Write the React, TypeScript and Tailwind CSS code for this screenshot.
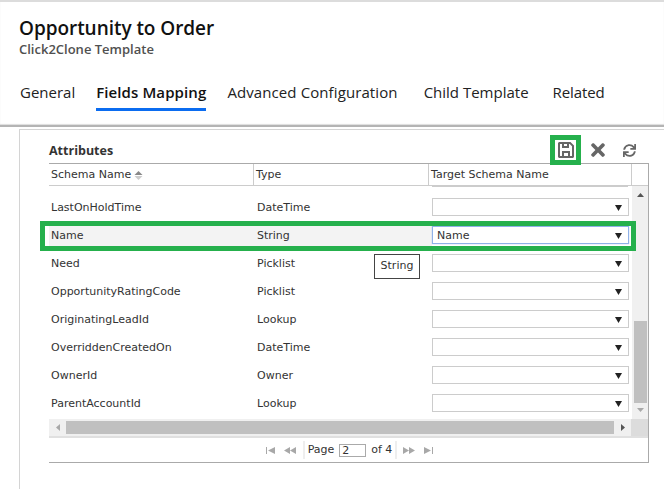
import { FaTimes, FaSync } from 'react-icons/fa'

const rows = [
  { name: 'LastOnHoldTime', type: 'DateTime' },
  { name: 'Name', type: 'String', value: 'Name', active: true },
  { name: 'Need', type: 'Picklist' },
  { name: 'OpportunityRatingCode', type: 'Picklist' },
  { name: 'OriginatingLeadId', type: 'Lookup' },
  { name: 'OverriddenCreatedOn', type: 'DateTime' },
  { name: 'OwnerId', type: 'Owner' },
  { name: 'ParentAccountId', type: 'Lookup' },
]

function PagerIcon({ d, w = 10 }: { d: string; w?: number }) {
  return (
    <svg width={w} height="7" viewBox={`0 0 ${w} 7`} className="fill-[#a8a8a8]">
      <path d={d} />
    </svg>
  )
}

export default function App() {
  return (
    <div className="relative w-[664px] h-[489px] overflow-hidden bg-white font-['DejaVu_Sans',sans-serif] text-[11px] text-[#333]">
      {/* Header */}
      <div className="h-[127px] border-t-2 border-[#dcdcdc] border-b-2 border-b-[#b4b4b4] shadow-[0_-1px_1px_#ddd_inset] pl-[19px] font-['Open_Sans',sans-serif]">
        <h1 className="mt-[15px] text-[19px] leading-[22px] font-semibold text-[#111] -tracking-[0.05px]">Opportunity to Order</h1>
        <p className="mt-[3px] text-[13px] leading-[15px] font-semibold text-[#505050]">Click2Clone Template</p>
        <div className="flex mt-[25px] pl-px text-[15px] leading-[21px] text-[#222]">
          <div className="pb-[8px]">General</div>
          <div className="ml-[21px] pb-[5px] border-b-[3px] border-[#0b6cf0] font-semibold text-[#111] tracking-[0.1px]">Fields Mapping</div>
          <div className="ml-[21px] pb-[8px] tracking-[0.1px]">Advanced Configuration</div>
          <div className="ml-[26px] pb-[8px]">Child Template</div>
          <div className="ml-[24px] pb-[8px] -tracking-[0.1px]">Related</div>
        </div>
      </div>

      {/* Card */}
      <div className="ml-[19px] mt-[2px] h-[360px] border-l border-t border-[#d4d4d4] pl-[29px] pr-[15px]">
        <div className="flex h-[33px] items-center justify-between">
          <span className="font-['Open_Sans',sans-serif] text-[12.5px] font-bold text-[#333] pt-[10px]">Attributes</span>
          <div className="flex items-center pr-[13px] pt-[7px] text-[#666]">
            <svg width="16" height="16" viewBox="0 0 16 16" className="fill-[#666]">
              <path
                fillRule="evenodd"
                d="M1 0H12.5L16 3.5V15L15 16H1L0 15V1zM2 2V14H14V4.3L11.7 2H11V6H4V2zM6 2V4H9V2zM4 9H12V14H10V11H6V14H4z"
              />
            </svg>
            <FaTimes size={20} className="ml-[14px]" />
            <FaSync size={13} className="ml-[15px]" />
          </div>
        </div>

        {/* Grid */}
        <div className="border-r border-b border-[#aaa]">
          <div className="flex h-[23px] border-y border-t-[#aaa] border-b-[#ccc] items-center">
            <div className="w-[205px] pl-[2px] pt-[2px] flex items-center gap-[3px] h-full border-r border-[#ccc]">
              Schema Name
              <svg width="9" height="9" viewBox="0 0 9 9">
                <path d="M4.5 0 8.5 4H.5z" fill="#888" />
                <path d="M4.5 9 8.5 5H.5z" fill="#ccc" />
              </svg>
            </div>
            <div className="w-[175px] pl-[2px] pt-[2px] flex items-center h-full border-r border-[#ccc]">Type</div>
            <div className="w-[203px] pl-[2px] pt-[2px] flex items-center h-full border-r border-[#ccc]">Target Schema Name</div>
          </div>

          <div className="flex">
            <div className="flex-1 min-w-0">
              <div className="h-[7px] pl-[383px]">
                <div className="w-[196px] border-t border-[#ccc]" />
              </div>
              {rows.map((row) => (
                <div key={row.name} className="flex h-[28px] items-center">
                  <div className={`w-[204px] h-full flex items-center pl-[2px] pt-[2px] ${row.active ? 'bg-[#f3f3f3]' : ''}`}>{row.name}</div>
                  <div className={`w-[179px] h-full flex items-center pl-[4px] pt-[2px] ${row.active ? 'bg-[#f3f3f3]' : ''}`}>{row.type}</div>
                  <div
                    className={`w-[197px] h-[18px] flex items-center justify-between pl-[4px] pr-[6px] bg-white border ${row.active ? 'border-[#8fb1e8] shadow-[0_0_1px_#8fb1e8]' : 'border-[#ccc]'}`}
                  >
                    <span className="pt-[2px]">{row.value}</span>
                    <svg width="7" height="7" viewBox="0 0 7 7">
                      <path d="M0 1H7L3.5 7z" fill="#222" />
                    </svg>
                  </div>
                </div>
              ))}
              <div className="h-[2px]" />
            </div>

            {/* Vertical scrollbar */}
            <div className="w-[16px] bg-[#f0f0f0] flex flex-col items-center justify-between py-[7px] relative">
              <svg width="7" height="4" viewBox="0 0 7 4"><path d="M3.5 0 7 4H0z" fill="#555" /></svg>
              <div className="absolute left-[2px] top-[135px] w-[13px] h-[82px] bg-[#c0c0c0]" />
              <svg width="7" height="4" viewBox="0 0 7 4"><path d="M3.5 4 7 0H0z" fill="#a8a8a8" /></svg>
            </div>
          </div>

          {/* Horizontal scrollbar */}
          <div className="flex h-[17px] bg-[#f0f0f0] items-center border-b-2 border-[#e0e0e0] box-content">
            <div className="w-[17px] flex justify-center">
              <svg width="4" height="7" viewBox="0 0 4 7"><path d="M0 3.5 4 0V7z" fill="#a8a8a8" /></svg>
            </div>
            <div className="w-[548px] h-[13px] bg-[#c0c0c0]" />
            <div className="w-[17px] flex justify-center">
              <svg width="4" height="7" viewBox="0 0 4 7"><path d="M4 3.5 0 0V7z" fill="#555" /></svg>
            </div>
            <div className="flex-1 h-full bg-[#dcdcdc]" />
          </div>

          {/* Pager */}
          <div className="flex h-[24px] items-center justify-center pl-[3px]">
            <div className="flex items-center gap-[8px] pr-[7px]">
              <PagerIcon d="M0 0H1V7H0zM2 3.5 9 0V7z" />
              <PagerIcon w={12} d="M0 3.5 6 0V7zM6 3.5 12 0V7z" />
            </div>
            <div className="flex items-center h-[18px] border-x-2 border-[#eee] px-[3px] gap-[5px] text-[11px] text-[#333]">
              Page
              <div className="w-[27px] h-[13px] border border-[#aaa] pl-[2px] leading-[12px]">2</div>
              of 4
            </div>
            <div className="flex items-center gap-[9px] pl-[6px]">
              <PagerIcon w={12} d="M0 0 6 3.5 0 7zM6 0 12 3.5 6 7z" />
              <PagerIcon d="M0 0 7 3.5 0 7zM8 0H9V7H8z" />
            </div>
          </div>
        </div>
      </div>

      {/* Green callouts drawn over the grid */}
      <div className="absolute left-[40px] top-[221px] w-[596px] h-[30px] border-[5px] border-[#25b04c]" />
      <div className="absolute left-[550px] top-[135px] w-[31px] h-[30px] border-[5px] border-[#25b04c]" />

      {/* Tooltip */}
      <div className="absolute left-[374px] top-[254px] w-[46px] h-[25px] flex items-center justify-center bg-white border border-[#444]">
        String
      </div>
    </div>
  )
}
